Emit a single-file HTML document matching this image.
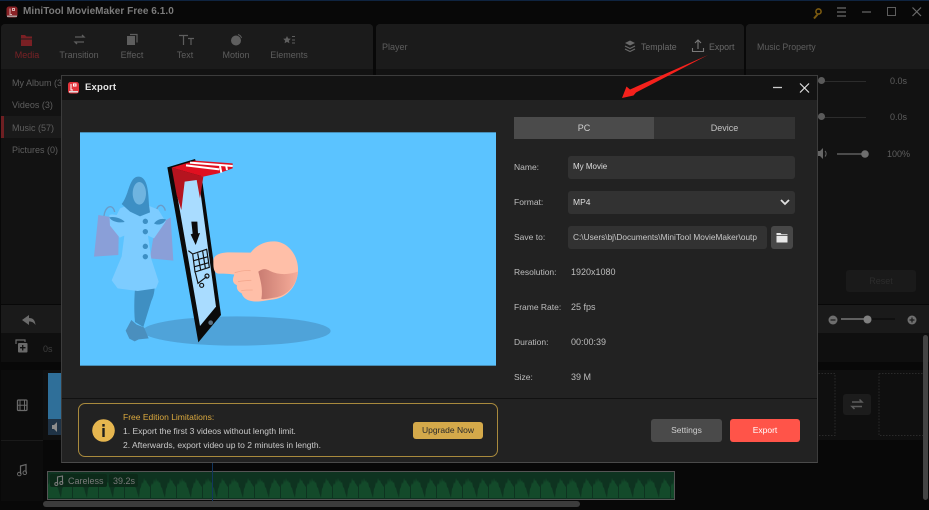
<!DOCTYPE html>
<html><head><meta charset="utf-8">
<style>
html,body{margin:0;padding:0;background:#080808;}
#r{position:relative;width:929px;height:510px;overflow:hidden;background:#080808;font-family:"Liberation Sans",sans-serif;}
#r div,#r span.a,#r svg{position:absolute;}
.t{white-space:nowrap;font-size:9px;line-height:12px;color:#5e5e5e;}
.l{white-space:nowrap;font-size:8.5px;line-height:12px;color:#bdbdbd;}
.c{text-align:center;}
.inp{background:#323232;border-radius:3px;}
</style></head><body>
<div id="r">
<div style="left:0;top:0;width:929px;height:1px;background:#0f2440"></div>
<!-- title bar -->
<svg style="left:6px;top:6px" width="12" height="12" viewBox="0 0 12 12"><rect x=".5" y=".5" width="11" height="11" rx="2.5" fill="#8a2226"/><path d="M4 2.5v6h2M6.5 2.5h2v2h-2z" stroke="#d8b0b0" stroke-width="1" fill="none"/><rect x="1" y="9.5" width="10" height="1.6" fill="#a99"/></svg>
<div class="t" style="left:23px;top:5px;font-size:10px;font-weight:bold;color:#7b7b7b;letter-spacing:.05px;line-height:13px">MiniTool MovieMaker Free 6.1.0</div>
<svg style="left:810px;top:7px" width="119" height="14" viewBox="0 0 119 14" fill="none">
<path d="M4 11.5l3.5-4" stroke="#7b5a10" stroke-width="2"/><circle cx="8.5" cy="4.5" r="2.6" stroke="#7b5a10" stroke-width="1.6"/>
<path d="M27 1h9M27 5h9M27 9h9" stroke="#6a6a6a" stroke-width="1.2"/>
<path d="M52 5h9" stroke="#6a6a6a" stroke-width="1.2"/>
<rect x="77.500" y=".5" width="8" height="8" stroke="#5e5e5e"/>
<path d="M102.500 .5l8.500 8.500M111 .5L102.500 9" stroke="#6a6a6a" stroke-width="1.200"/>
</svg>
<!-- panels -->
<div style="left:1px;top:24px;width:372px;height:280px;background:#121212;border-radius:4px 4px 0 0"></div>
<div style="left:1px;top:24px;width:372px;height:45px;background:#1b1b1b;border-radius:4px 4px 0 0"></div>
<div style="left:376px;top:24px;width:368px;height:280px;background:#121212;border-radius:4px 4px 0 0"></div>
<div style="left:376px;top:24px;width:368px;height:45px;background:#1b1b1b;border-radius:4px 4px 0 0"></div>
<div style="left:746px;top:24px;width:183px;height:280px;background:#121212;border-radius:4px 0 0 0"></div>
<div style="left:746px;top:24px;width:183px;height:45px;background:#1b1b1b;border-radius:4px 0 0 0"></div>
<!-- tabs -->
<svg style="left:0;top:30px" width="320" height="20" viewBox="0 0 320 20" fill="none">
<path d="M21 5h4l1.500 1.500H32v9.500H21z" fill="#7a2024"/><path d="M21 9h11" stroke="#1b1b1b"/>
<path d="M75 7h9l-2-2M84 12h-9l2 2" stroke="#5e5e5e" stroke-width="1.300"/>
<rect x="127" y="6" width="8" height="9" fill="#5e5e5e"/><path d="M130 4.500h7v8" stroke="#5e5e5e" stroke-width="1.200"/>
<path d="M179 5.500h9M183.500 5.500V15M188 8.500h6M191 8.500V15" stroke="#5e5e5e" stroke-width="1.200"/>
<circle cx="236" cy="10.500" r="5" fill="#5e5e5e"/><path d="M238 4.500c1.700.5 3 1.700 3.500 3.500" stroke="#5e5e5e"/>
<path d="M287 6l1.200 2.500 2.600.3-1.900 1.800.5 2.600-2.400-1.300-2.400 1.300.5-2.600-1.900-1.800 2.600-.3z" fill="#5e5e5e"/><path d="M292 6.500h3M292 10h3M292 13h3" stroke="#5e5e5e"/>
</svg>
<div class="t c" style="left:7px;width:40px;top:49px;color:#7a2226">Media</div>
<div class="t c" style="left:54px;width:50px;top:49px">Transition</div>
<div class="t c" style="left:112px;width:40px;top:49px">Effect</div>
<div class="t c" style="left:165px;width:40px;top:49px">Text</div>
<div class="t c" style="left:216px;width:40px;top:49px">Motion</div>
<div class="t c" style="left:264px;width:50px;top:49px">Elements</div>
<div class="t" style="left:382px;top:41px">Player</div>
<svg style="left:623px;top:39px" width="90" height="15" viewBox="0 0 90 15" fill="none">
<path d="M7 1.500l5 2.500-5 2.500-5-2.500z" fill="#6a6a6a"/><path d="M2 7l5 2.500L12 7M2 10l5 2.500L12 10" stroke="#6a6a6a" stroke-width="1.100"/>
<path d="M75 1v9M72 4l3-3 3 3M69.500 9v3.500h11V9" stroke="#7a7a7a" stroke-width="1.100"/>
</svg>
<div class="t" style="left:641px;top:41px;color:#6a6a6a;font-size:8.800px">Template</div>
<div class="t" style="left:709px;top:41px;color:#6a6a6a;font-size:8.800px">Export</div>
<div class="t" style="left:757px;top:41px;font-size:8.800px">Music Property</div>
<!-- sidebar -->
<div class="t" style="left:12px;top:77px">My Album (3)</div>
<div class="t" style="left:12px;top:99px">Videos (3)</div>
<div style="left:1px;top:116px;width:60px;height:22px;background:#1a1a1a"></div>
<div style="left:1px;top:116px;width:3px;height:22px;background:#6e1f22"></div>
<div class="t" style="left:12px;top:122px">Music (57)</div>
<div class="t" style="left:12px;top:144px">Pictures (0)</div>
<!-- right props -->
<div style="left:818px;top:81px;width:48px;height:1px;background:#2c2c2c"></div>
<div style="left:818px;top:117px;width:48px;height:1px;background:#2c2c2c"></div>
<div style="left:818px;top:77px;width:7px;height:7px;border-radius:50%;background:#5a5a5a"></div>
<div style="left:818px;top:113px;width:7px;height:7px;border-radius:50%;background:#5a5a5a"></div>
<div class="t" style="left:890px;top:75px">0.0s</div>
<div class="t" style="left:890px;top:111px">0.0s</div>
<svg style="left:818px;top:148px" width="60" height="12" viewBox="0 0 60 12" fill="none"><path d="M0 3h2l3-3v11l-3-3H0z" fill="#666"/><path d="M7 3c1.500 1.500 1.500 4 0 5.500" stroke="#666"/><path d="M19 6h27" stroke="#5e5e5e" stroke-width="1.500"/><circle cx="47" cy="6" r="3.800" fill="#6e6e6e"/></svg>
<div class="t" style="left:887px;top:148px">100%</div>
<div style="left:846px;top:270px;width:70px;height:22px;background:#1a1a1a;border-radius:3px"></div>
<div class="t c" style="left:846px;width:70px;top:275px;color:#2c2c2c">Reset</div>
<!-- timeline -->
<div style="left:1px;top:305px;width:928px;height:28px;background:#1a1a1a"></div>
<div style="left:1px;top:333px;width:928px;height:29px;background:#0f0f0f"></div>
<div style="left:1px;top:370px;width:928px;height:70px;background:#0f0f0f"></div>
<div style="left:1px;top:370px;width:42px;height:131px;background:#0c0c0c"></div>
<div style="left:1px;top:440px;width:42px;height:1px;background:#1a1a1a"></div>
<svg style="left:0;top:308px" width="60" height="180" viewBox="0 0 60 180" fill="none">
<path d="M22 12l7-5v3c4 0 6 2 6.500 7-2-3-4-3.500-6.500-3.500V17z" fill="#6b6b6b"/>
<path d="M16 36v-4h9v2" stroke="#6a6a6a" stroke-width="1.200"/><rect x="18" y="35" width="9.500" height="9.500" rx="1" fill="#6a6a6a"/><path d="M22.700 37v5.500M20 39.700h5.500" stroke="#111" stroke-width="1.300"/>
<rect x="17.500" y="92" width="9.500" height="10.500" rx="1" stroke="#6a6a6a" stroke-width="1.300"/><path d="M20 92v10.500M24.500 92v10.500M17.500 97.200H27" stroke="#6a6a6a"/>
<path d="M20.500 166v-8l5.500-1.500v8" stroke="#6a6a6a" stroke-width="1.200"/><circle cx="19.300" cy="166" r="1.800" stroke="#6a6a6a"/><circle cx="24.800" cy="164.700" r="1.800" stroke="#6a6a6a"/>
</svg>
<div class="t" style="left:43px;top:343px;color:#3f3f3f">0s</div>
<div style="left:48px;top:373px;width:20px;height:46px;background:#2f6f99"></div>
<div style="left:48px;top:419px;width:20px;height:16px;background:#1f3346"></div>
<svg style="left:52px;top:422px" width="10" height="10" viewBox="0 0 10 10"><path d="M0 3h2l3-3v10L2 7H0z" fill="#8d8d8d"/></svg>
<svg style="left:818px;top:312px" width="111" height="150" viewBox="0 0 111 150" fill="none">
<circle cx="15" cy="8" r="4.500" fill="#6e6e6e"/><path d="M12.500 8h5" stroke="#1a1a1a" stroke-width="1.200"/>
<path d="M23 7h25" stroke="#777" stroke-width="1.500"/><path d="M50 7h27" stroke="#0c0c0c" stroke-width="1.500"/><circle cx="49.500" cy="7.500" r="4" fill="#808080"/>
<circle cx="94" cy="8" r="4.500" fill="#6e6e6e"/><path d="M91.500 8h5M94 5.500v5" stroke="#1a1a1a" stroke-width="1.200"/>
<path d="M.5 61.500H17V123.500H0M61 61.500h44M61 61.500V123.500h44" stroke="#2a2a2a" stroke-dasharray="1.500 1.500"/>
</svg>
<div style="left:843px;top:394px;width:28px;height:21px;background:#1c1c1c;border-radius:3px"></div>
<svg style="left:849px;top:398px" width="16" height="13" viewBox="0 0 16 13" fill="none"><path d="M3 4h10L10.500 1.500M13 8.500H3L5.500 11" stroke="#5c5c5c" stroke-width="1.500"/></svg>
<div style="left:923px;top:335px;width:5px;height:165px;background:#444;border-radius:3px"></div>
<!-- audio -->
<svg style="left:47px;top:471px" width="628" height="29" viewBox="0 0 628 29">
<defs><pattern id="w" x="0" y="0" width="26" height="27" patternUnits="userSpaceOnUse"><path d="M0 27V15l1-3 1 2 1-6 1 4 1-5 1 4 1-2 1 3 1-1 1 5 1 1 1 4 1 3 1 3h0l1-9 1-2 1-5 1 2 1-6 1 3 1-1 1 3 1 1 1 2 1 1v14z" fill="#134a2a"/></pattern></defs>
<rect x=".5" y=".5" width="627" height="28" fill="#0e3320" stroke="#555"/>
<rect x="1" y="1" width="626" height="27" fill="url(#w)"/>
</svg>
<div style="left:50px;top:474px;width:57px;height:13px;background:#0c2a19;border-radius:2px"></div>
<div style="left:109px;top:474px;width:29px;height:13px;background:#0c2a19;border-radius:2px"></div>
<svg style="left:54px;top:475px" width="11" height="11" viewBox="0 0 11 11" fill="none"><path d="M3.500 9V2l5-1v7" stroke="#7a7a7a" stroke-width="1.100"/><circle cx="2.300" cy="9" r="1.500" stroke="#7a7a7a"/><circle cx="7.300" cy="8" r="1.500" stroke="#7a7a7a"/></svg>
<div class="t" style="left:68px;top:475px;color:#7a7a7a">Careless</div>
<div class="t" style="left:113px;top:475px;color:#7a7a7a">39.2s</div>
<div style="left:212px;top:463px;width:1px;height:38px;background:#12365e"></div>
<div style="left:43px;top:501px;width:537px;height:6px;background:#3c3c3c;border-radius:3px"></div>

<!-- dialog -->
<div style="left:61px;top:75px;width:757px;height:388px;background:#222;border:1px solid #3c3c3c;box-sizing:border-box;border-bottom-color:#4a4a4a"></div>
<div style="left:62px;top:76px;width:755px;height:24px;background:#131313"></div>
<svg style="left:68px;top:82px" width="11" height="12" viewBox="0 0 11 12"><rect width="11" height="11.500" rx="2.500" fill="#e2343c"/><path d="M3 2v6h2M5.500 2h2.500v2H5.500z" stroke="#fff" fill="none"/><rect x="1" y="9" width="9" height="1.500" fill="#ddd"/></svg>
<div class="l" style="left:85px;top:82px;font-size:9.500px;font-weight:bold;color:#e6e6e6;letter-spacing:.2px">Export</div>
<svg style="left:770px;top:81px" width="45" height="14" viewBox="0 0 45 14" fill="none"><path d="M3 6.500h9" stroke="#ccc" stroke-width="1.300"/><path d="M30 2.500l9 9M39 2.500l-9 9" stroke="#e0e0e0" stroke-width="1.200"/></svg>
<!-- illustration -->
<svg style="left:80px;top:130px" width="416" height="238" viewBox="0 0 1248 714">
<defs><linearGradient id="h" x1="0" y1="0" x2="1" y2="0"><stop offset="0" stop-color="#c97c72"/><stop offset="1" stop-color="#f7ad9a"/></linearGradient></defs>
<rect x="0" y="7" width="1248" height="700" fill="#5bc3ff"/>
<ellipse cx="470" cy="603" rx="282" ry="44" fill="#4fa3d9"/>
<!-- bags -->
<path d="M55 255l62 10-2 110-73 5z" fill="#8a9fd8"/><path d="M225 290l47-28 8 130-70-7z" fill="#8a9fd8"/>
<path d="M72 258c2-28 26-40 32-12M228 248c2-26 22-30 28-6" stroke="#6a9cc9" stroke-width="4" fill="none"/>
<!-- legs and shoes -->
<path d="M168 445l54-2c4 30 2 50-8 70l-24 78-25-15c-4-40-2-90 3-131z" fill="#3f8fc2"/>
<path d="M137 602l17-32 16 14 22 8 14 33-30 3-12 6-16-8z" fill="#4a8fbe"/>
<!-- coat -->
<path d="M120 235l30-12 55 4 30 12 22 36-35 50-18-8 10 70 22 68-8 20-55 8-60-8-18-24 30-72 8-62-14 6-29-36-2-32 8-2 14 2z" fill="#7dccff"/>
<path d="M88 262c15-4 40 4 46 14-18 4-40-2-46-14zM222 280c10-12 22-16 36-12-6 14-24 20-36 12z" fill="#3d8fc4"/>
<path d="M125 222c22-26 22-82 50-82 28 0 30 46 32 85l3 22-30 12-30-14z" fill="#3d8fc4"/>
<ellipse cx="178" cy="190" rx="20" ry="34" fill="#6fb4e0"/>
<circle cx="196" cy="274" r="8" fill="#3d8fc4"/><circle cx="196" cy="305" r="8" fill="#3d8fc4"/><circle cx="196" cy="349" r="8" fill="#3d8fc4"/><circle cx="196" cy="380" r="8" fill="#3d8fc4"/>
<!-- phone -->
<path d="M262 112L345 87 365 140 423 555 355 637z" fill="#0a0a0a"/>
<path d="M278 118L355 140 408 530 360 588z" fill="#a9dcff"/>
<path d="M275 113l95 27-10 65-10-55-36 5-10 85-14-45z" fill="#b5141f"/>
<path d="M275 113l70-21 113 8v15l-43 15-45 10z" fill="#e01020"/>
<path d="M330 98l128 10M318 106l100 12" stroke="#fff" stroke-width="6" fill="none"/>
<path d="M420 108l4 20M438 104l3 16" stroke="#fff" stroke-width="6"/>
<path d="M334 275h18l2 35 6-1-13 36-15-32 6-2z" fill="#0c0c0c"/>
<g fill="none" stroke="#111" stroke-width="3.500"><path d="M325 362l13 10 42-14 8 54-43 14-7-54M341 392l43-12M344 410l42-12M353 370l9 50M368 364l8 50M346 428l8 32 26-20"/><circle cx="365" cy="466" r="6"/><circle cx="381" cy="438" r="6"/></g>
<circle cx="392" cy="578" r="7" fill="#5a6f80"/>
<!-- hand -->
<path d="M400 393c0-18 20-26 50-26l62 1c16-22 42-35 72-34 40 2 68 40 70 80 2 50-30 88-72 94-30 4-45 8-62 6-16-2-30-8-35-24-12-6-16-14-14-24-12-6-16-14-8-32-8-2-30-3-45-3-18 0-18-20-18-38z" fill="#ffbfa8"/>
<path d="M535 425c15-12 25-8 35-2 25 12 55 12 84 2-2 35-28 72-70 78-20 3-32 6-40 4 6-30-4-60-9-82z" fill="url(#h)"/>
<path d="M464 428c14-4 30-8 48-6M474 455c12-2 26-4 40-4M484 482c10-2 24-2 34-2" stroke="#f4a88e" stroke-width="2.500" fill="none"/>
</svg>
<!-- segmented -->
<div style="left:514px;top:117px;width:140px;height:22px;background:#4b4b4b"></div>
<div style="left:654px;top:117px;width:141px;height:22px;background:#333"></div>
<div class="l c" style="left:514px;width:140px;top:122px;color:#d0d0d0;font-size:9px">PC</div>
<div class="l c" style="left:654px;width:141px;top:122px;color:#c4c4c4;font-size:9px">Device</div>
<!-- form -->
<div class="l" style="left:514px;top:161px">Name:</div>
<div class="inp" style="left:568px;top:156px;width:227px;height:23px"></div>
<div class="l" style="left:573px;top:161px;font-size:8px;color:#dedede">My Movie</div>
<div class="l" style="left:514px;top:196px">Format:</div>
<div class="inp" style="left:568px;top:191px;width:227px;height:23px"></div>
<div class="l" style="left:573px;top:196px;color:#dedede">MP4</div>
<svg style="left:779px;top:198px" width="12" height="9" viewBox="0 0 12 9" fill="none"><path d="M2 2l4 4 4-4" stroke="#e0e0e0" stroke-width="1.800"/></svg>
<div class="l" style="left:514px;top:231px">Save to:</div>
<div class="inp" style="left:568px;top:226px;width:199px;height:23px;overflow:hidden"></div>
<div class="l" style="left:573px;top:231px;width:191px;overflow:hidden;font-size:8.300px;color:#c8c8c8">C:\Users\bj\Documents\MiniTool MovieMaker\outp</div>
<div style="left:771px;top:226px;width:22px;height:23px;background:#474747;border-radius:3px"></div>
<svg style="left:776px;top:232px" width="12" height="11" viewBox="0 0 12 11"><path d="M.5 1h4l1 1.300h6V3H.5z" fill="#e8e8e8"/><rect x=".5" y="3.800" width="11" height="6.700" fill="#e8e8e8"/></svg>
<div class="l" style="left:514px;top:266px">Resolution:</div><div class="l" style="left:571px;top:266px;font-size:9px">1920x1080</div>
<div class="l" style="left:514px;top:301px">Frame Rate:</div><div class="l" style="left:571px;top:301px;font-size:9px">25 fps</div>
<div class="l" style="left:514px;top:336px">Duration:</div><div class="l" style="left:571px;top:336px;font-size:9px">00:00:39</div>
<div class="l" style="left:514px;top:371px">Size:</div><div class="l" style="left:571px;top:371px;font-size:9px">39 M</div>
<!-- footer -->
<div style="left:62px;top:398px;width:755px;height:1px;background:#111"></div>
<div style="left:78px;top:403px;width:420px;height:54px;box-sizing:border-box;border:1px solid #a98a3d;border-radius:7px"></div>
<svg style="left:92px;top:419px" width="23" height="23" viewBox="0 0 23 23"><circle cx="11.500" cy="11.500" r="11.300" fill="#e6b64f"/><rect x="10.300" y="5" width="2.400" height="2.600" fill="#1e1e1e"/><rect x="10.300" y="9" width="2.400" height="9" fill="#1e1e1e"/></svg>
<div class="l" style="left:123px;top:411px;color:#dba93e">Free Edition Limitations:</div>
<div class="l" style="left:123px;top:425px;color:#c9c9c9">1. Export the first 3 videos without length limit.</div>
<div class="l" style="left:123px;top:439px;color:#c9c9c9">2. Afterwards, export video up to 2 minutes in length.</div>
<div style="left:413px;top:422px;width:70px;height:17px;background:#d4a94a;border-radius:3px"></div>
<div class="l c" style="left:413px;width:70px;top:424px;color:#2a2a2a">Upgrade Now</div>
<div style="left:651px;top:419px;width:71px;height:23px;background:#4a4a4a;border-radius:3px"></div>
<div class="l c" style="left:651px;width:71px;top:424px;color:#cfcfcf">Settings</div>
<div style="left:730px;top:419px;width:70px;height:23px;background:#ff5449;border-radius:3px"></div>
<div class="l c" style="left:730px;width:70px;top:424px;color:#fff">Export</div>
<!-- arrow -->
<svg style="left:0;top:0" width="929" height="510" viewBox="0 0 929 510"><path d="M708 55L636 92.500 633.500 95.500 622 98 626.500 86.500 630 89.500z" fill="#f5211c"/></svg>
</div>
</body></html>
